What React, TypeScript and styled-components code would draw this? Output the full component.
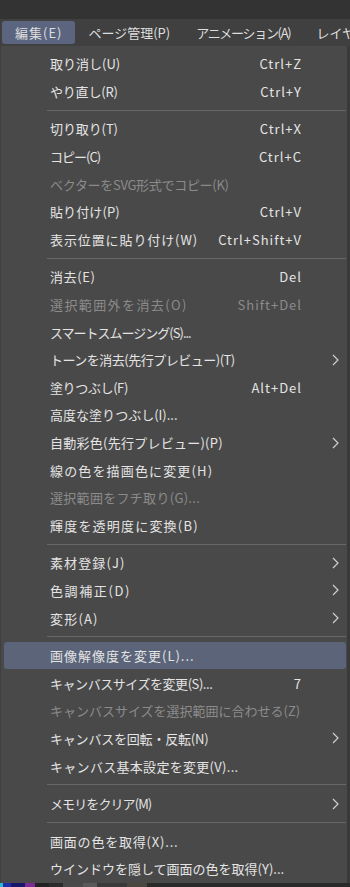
import React from "react";
import styled, { createGlobalStyle } from "styled-components";

const GlobalStyle = createGlobalStyle`
  html, body {
    margin: 0;
    padding: 0;
    background: #3a3a3a;
  }
  body {
    font-family: "Noto Sans CJK JP", "Noto Sans", sans-serif;
    -webkit-font-smoothing: antialiased;
  }
`;

type Entry =
  | { kind: "sep" }
  | {
      kind: "item";
      label: string;
      shortcut?: string;
      sub?: boolean;
      disabled?: boolean;
      active?: boolean;
      spacing?: number;
    };

const entries: Entry[] = [
  { kind: "item", label: "取り消し(U)", shortcut: "Ctrl+Z", spacing: 0 },
  { kind: "item", label: "やり直し(R)", shortcut: "Ctrl+Y", spacing: -0.2 },
  { kind: "sep" },
  { kind: "item", label: "切り取り(T)", shortcut: "Ctrl+X", spacing: -0.1 },
  { kind: "item", label: "コピー(C)", shortcut: "Ctrl+C", spacing: -1 },
  { kind: "item", label: "ベクターをSVG形式でコピー(K)", disabled: true, spacing: -0.3 },
  { kind: "item", label: "貼り付け(P)", shortcut: "Ctrl+V", spacing: 0.1 },
  { kind: "item", label: "表示位置に貼り付け(W)", shortcut: "Ctrl+Shift+V", spacing: 0.9 },
  { kind: "sep" },
  { kind: "item", label: "消去(E)", shortcut: "Del", spacing: 0.6 },
  { kind: "item", label: "選択範囲外を消去(O)", shortcut: "Shift+Del", disabled: true, spacing: 1.4 },
  { kind: "item", label: "スマートスムージング(S)...", spacing: -1 },
  { kind: "item", label: "トーンを消去(先行プレビュー)(T)", sub: true, spacing: -0.5 },
  { kind: "item", label: "塗りつぶし(F)", shortcut: "Alt+Del", spacing: -0.4 },
  { kind: "item", label: "高度な塗りつぶし(I)...", spacing: 0 },
  { kind: "item", label: "自動彩色(先行プレビュー)(P)", sub: true, spacing: 0.25 },
  { kind: "item", label: "線の色を描画色に変更(H)", spacing: 1.15 },
  { kind: "item", label: "選択範囲をフチ取り(G)...", disabled: true, spacing: 0.3 },
  { kind: "item", label: "輝度を透明度に変換(B)", spacing: 1.2 },
  { kind: "sep" },
  { kind: "item", label: "素材登録(J)", sub: true, spacing: 1.1 },
  { kind: "item", label: "色調補正(D)", sub: true, spacing: 1.6 },
  { kind: "item", label: "変形(A)", sub: true, spacing: 1.2 },
  { kind: "sep" },
  { kind: "item", label: "画像解像度を変更(L)...", active: true, spacing: 1 },
  { kind: "item", label: "キャンバスサイズを変更(S)...", shortcut: "7", spacing: -0.45 },
  { kind: "item", label: "キャンバスサイズを選択範囲に合わせる(Z)", disabled: true, spacing: 0 },
  { kind: "item", label: "キャンバスを回転・反転(N)", sub: true, spacing: -0.2 },
  { kind: "item", label: "キャンバス基本設定を変更(V)...", spacing: 0.3 },
  { kind: "sep" },
  { kind: "item", label: "メモリをクリア(M)", sub: true, spacing: -0.9 },
  { kind: "sep" },
  { kind: "item", label: "画面の色を取得(X)...", spacing: 0.8 },
  { kind: "item", label: "ウインドウを隠して画面の色を取得(Y)...", spacing: 0 },
];

const menuTitles = [
  { label: "編集(E)", active: true, spacing: 1 },
  { label: "ページ管理(P)", spacing: 0 },
  { label: "アニメーション(A)", spacing: -1.3 },
  { label: "レイヤー(L)", spacing: 0 },
];

const strip = [
  { color: "#27b9d0", w: 3 },
  { color: "#1d2fa6", w: 8 },
  { color: "#18186a", w: 14 },
  { color: "#7d2a94", w: 10 },
  { color: "#222222", w: 14 },
  { color: "#2c2c2c", w: 14 },
  { color: "#4a4a4a", w: 20 },
  { color: "#5a5a5a", w: 14 },
  { color: "#3a3a3a", w: 30 },
  { color: "#4c4640", w: 20 },
  { color: "#2a2a2a", w: 203 },
];

const Screen = styled.div`
  width: 350px;
  height: 887px;
  display: flex;
  flex-direction: column;
  background: #3a3a3a;
  overflow: hidden;
`;

const TitleBand = styled.div`
  height: 19px;
  flex: none;
  background: #333333;
`;

const MenuBar = styled.div`
  height: 27px;
  flex: none;
  display: flex;
  align-items: center;
  padding-left: 2px;
  background: #404040;
  white-space: nowrap;
  overflow: hidden;
`;

const MenuTitle = styled.div<{ $active?: boolean; $spacing: number }>`
  flex: none;
  height: 23px;
  display: flex;
  align-items: center;
  padding: 0 13px;
  border-radius: 3px;
  background: ${(p) => (p.$active ? "#5b6580" : "transparent")};
  color: #dedede;
  font-size: 13px;
  letter-spacing: ${(p) => p.$spacing}px;
`;

const Dropdown = styled.div`
  width: 347px;
  flex: none;
  display: flex;
  flex-direction: column;
  padding-top: 4px;
  box-sizing: border-box;
  background: #494949;
  border-left: 1px solid #3f3f3f;
`;

const Row = styled.div<{ $active?: boolean; $disabled?: boolean }>`
  height: 27.6px;
  margin: 0 1px 0 3px;
  padding-left: 46px;
  display: grid;
  grid-template-columns: 1fr auto 45px;
  align-items: center;
  border-radius: 3px;
  background: ${(p) => (p.$active ? "#5b6479" : "transparent")};
  color: ${(p) => (p.$disabled ? "#8b8b8b" : "#e4e4e4")};
  font-size: 13px;
  line-height: 1;
  white-space: nowrap;
`;

const Label = styled.span<{ $spacing: number }>`
  letter-spacing: ${(p) => p.$spacing}px;
`;

const Shortcut = styled.span`
  justify-self: end;
  letter-spacing: 1px;
  margin-right: -1px;
`;

const ArrowCell = styled.span`
  justify-self: end;
  display: flex;
  align-items: center;
  padding-right: 7px;
`;

const Separator = styled.div`
  height: 1px;
  margin: 4.5px 1px 4.5px 46px;
  background: #676767;
`;

const Strip = styled.div`
  flex: 1;
  display: flex;
`;

const StripBlock = styled.div<{ $color: string; $w: number }>`
  width: ${(p) => p.$w}px;
  flex: none;
  background: ${(p) => p.$color};
`;

const SubArrow = () => (
  <svg width="7" height="12" viewBox="0 0 7 12" fill="none">
    <path d="M1 1 L6 6 L1 11" stroke="#cfcfcf" strokeWidth="1.2" />
  </svg>
);

export default function App() {
  return (
    <Screen>
      <GlobalStyle />
      <TitleBand />
      <MenuBar>
        {menuTitles.map((t) => (
          <MenuTitle key={t.label} $active={t.active} $spacing={t.spacing}>
            {t.label}
          </MenuTitle>
        ))}
      </MenuBar>
      <Dropdown>
        {entries.map((e, i) =>
          e.kind === "sep" ? (
            <Separator key={i} />
          ) : (
            <Row key={i} $active={e.active} $disabled={e.disabled}>
              <Label $spacing={e.spacing ?? 0}>{e.label}</Label>
              <Shortcut>{e.shortcut ?? ""}</Shortcut>
              <ArrowCell>{e.sub ? <SubArrow /> : null}</ArrowCell>
            </Row>
          )
        )}
      </Dropdown>
      <Strip>
        {strip.map((b, i) => (
          <StripBlock key={i} $color={b.color} $w={b.w} />
        ))}
      </Strip>
    </Screen>
  );
}
